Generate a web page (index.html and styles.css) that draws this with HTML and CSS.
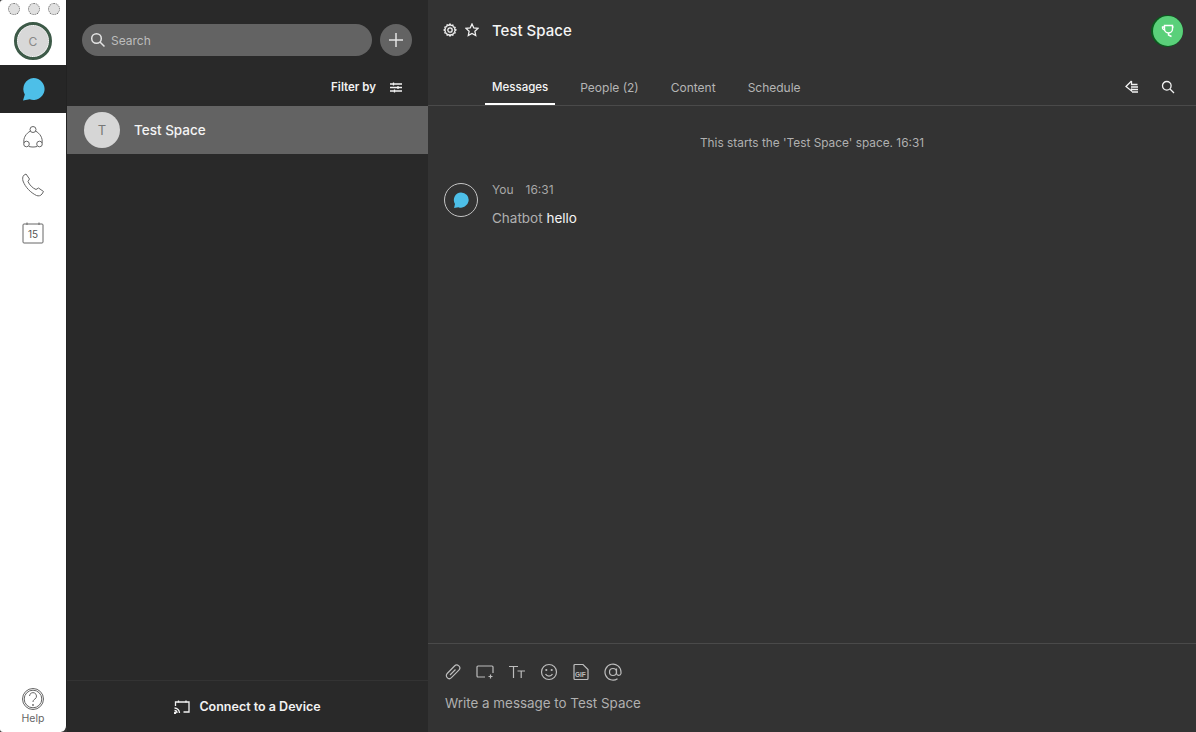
FILE: index.html
```html
<!DOCTYPE html>
<html lang="en">
<head>
<meta charset="utf-8">
<title>Test Space</title>
<link rel="stylesheet" href="styles.css">
</head>
<body>
<div class="app">
  <nav class="rail">
    <div class="lights"><span class="light"></span><span class="light"></span><span class="light"></span></div>
    <div class="me"><div class="me-inner">C</div></div>
    <div class="rail-item active">
      <svg width="26" height="26" viewBox="0 0 26 26"><path d="M13.500 2a11 11 0 1 1-3.800 21.300L3 24.500l1.800-6A11 11 0 0 1 13.500 2z" fill="#4dbfe8"/></svg>
    </div>
    <div class="rail-item">
      <svg class="line" width="26" height="26" viewBox="0 0 26 26"><circle cx="13" cy="5.500" r="3"/><circle cx="6.500" cy="20" r="2.800"/><circle cx="19.500" cy="20" r="2.800"/><path d="M10.500 7C6 9.500 3 14 4 19M15.500 7C20 9.500 23 14 22 19M9 22.500c2.700.7 5.300.7 8 0"/></svg>
    </div>
    <div class="rail-item">
      <svg class="line" width="26" height="26" viewBox="0 0 26 26"><path d="M3.500 3.500 6 2l3.500 5L8 9.500c1.500 3.500 4.500 6.500 8 8l2.500-1.500 5 3.500-1.500 2.500c-1.200 1.800-3.500 2.300-5.500 1.500C10.500 20.500 5.500 15.500 3 9c-.6-2-.4-4 .5-5.500z"/></svg>
    </div>
    <div class="rail-item">
      <svg class="line" width="26" height="26" viewBox="0 0 26 26"><rect x="3" y="4" width="20" height="19" rx="1"/><path d="M7 2.500v2.500M19 2.500v2.500"/><text x="13" y="18" class="cal-num">15</text></svg>
    </div>
    <div class="rail-help">
      <svg class="line" width="24" height="24" viewBox="0 0 24 24"><circle cx="12" cy="12" r="10.500"/><circle cx="12" cy="12" r="8.800"/><path d="M8.500 9a3.500 3.500 0 1 1 5.500 3c-1.300.8-2 1.500-2 3"/><circle cx="12" cy="18" r=".6"/></svg>
      <span>Help</span>
    </div>
  </nav>

  <aside class="list">
    <div class="search-row">
      <div class="search">
        <svg class="light-line" width="16" height="16" viewBox="0 0 16 16"><circle cx="6.500" cy="6.500" r="4.800"/><path d="m10 10 4.500 4.500"/></svg>
        <span>Search</span>
      </div>
      <div class="add"><svg class="light-line" width="16" height="16" viewBox="0 0 16 16"><path d="M8 1v14M1 8h14"/></svg></div>
    </div>
    <div class="filter">
      <span>Filter by</span>
      <svg class="white-line" width="12" height="11" viewBox="0 0 12 11"><path d="M0 2h12M0 5.500h12M0 9h12"/><path d="M3.500 .5v3M8 4v3M4.500 7.500v3"/></svg>
    </div>
    <div class="space-row">
      <div class="avatar">T</div>
      <span>Test Space</span>
    </div>
    <div class="device">
      <svg class="white-line" width="16" height="14" viewBox="0 0 16 14"><path d="M1.500 6V2h13.500v10H9.500"/><path d="M4.500 .5v2M12 .5v2"/><path d="M.5 8a5 5 0 0 1 5 5M.5 10.500a2.500 2.500 0 0 1 2.500 2.500"/><circle cx="1" cy="13" r=".6"/></svg>
      <span>Connect to a Device</span>
    </div>
  </aside>

  <main class="main">
    <header class="head">
      <div class="title-row">
        <svg class="white-line" width="14" height="14" viewBox="0 0 14 14"><circle cx="7" cy="7" r="2.200"/><path d="M7 1l1 1.600 1.800-.5.500 1.800 1.800.5-.5 1.800L13 7l-1.400 1 .5 1.800-1.800.5-.5 1.800-1.800-.5L7 13l-1-1.400-1.800.5-.5-1.800-1.800-.5.500-1.800L1 7l1.400-1-.5-1.800 1.800-.5.500-1.800 1.800.5z"/></svg>
        <svg class="white-line star" width="14" height="14" viewBox="0 0 14 14"><path d="m7 1 1.800 3.900 4.200.5-3.100 2.900.8 4.200L7 10.400l-3.700 2.100.8-4.200L1 5.400l4.200-.5z"/></svg>
        <h1>Test Space</h1>
        <div class="presence">
          <svg width="14" height="14" viewBox="0 0 14 14" fill="none" stroke="#fff" stroke-width="1.400"><path d="M3.500 1.500h8v3.500a4 4 0 0 1-8 0z"/><path d="M3.500 3H1.500a2.500 2.500 0 0 0 2.500 3M11.500 3h1"/><path d="M7.500 9v2l3 1.500"/></svg>
        </div>
      </div>
      <div class="tabs">
        <a class="tab on">Messages</a>
        <a class="tab">People (2)</a>
        <a class="tab">Content</a>
        <a class="tab">Schedule</a>
        <div class="tab-tools">
          <svg class="white-line" width="14" height="14" viewBox="0 0 14 14"><path d="M6.500 1 1 6.500 6.500 11V8.500"/><path d="M6.500 1v3.500h6M6 7h7M6 9.500h7M7 12h6"/></svg>
          <svg class="white-line" width="14" height="14" viewBox="0 0 14 14"><circle cx="5.800" cy="5.800" r="4.300"/><path d="m9 9 4 4"/></svg>
        </div>
      </div>
    </header>

    <section class="feed">
      <p class="start">This starts the 'Test Space' space. 16:31</p>
      <div class="msg">
        <div class="msg-avatar">
          <svg width="18" height="18" viewBox="0 0 26 26"><path d="M13 2a11 11 0 1 1-3.800 21.300L3 24.500l1.300-5.700A11 11 0 0 1 13 2z" fill="#4dbfe8"/></svg>
        </div>
        <div class="msg-body">
          <div class="msg-meta"><span>You</span><span>16:31</span></div>
          <div class="msg-text">Chatbot <b>hello</b></div>
        </div>
      </div>
    </section>

    <footer class="composer">
      <div class="tools">
        <svg class="grey-line" width="18" height="18" viewBox="0 0 18 18"><path d="M10.500 3 3.200 10.500a2.900 2.900 0 0 0 4.200 4.200l7.500-7.500a2.900 2.900 0 0 0-4.400-4.200zM6 12l5.500-5.500"/></svg>
        <svg class="grey-line" width="18" height="18" viewBox="0 0 18 18"><path d="M9 14H2a1 1 0 0 1-1-1V4a1 1 0 0 1 1-1h14a1 1 0 0 1 1 1v6"/><path d="M14.500 11.500v4M12.500 13.500h4"/></svg>
        <svg class="grey-line" width="18" height="18" viewBox="0 0 18 18"><path d="M1 3.500h9M5.500 3.500V15M9.500 8h7.500M13.200 8v7"/></svg>
        <svg class="grey-line" width="18" height="18" viewBox="0 0 18 18"><circle cx="9" cy="9" r="7.500"/><circle cx="6.300" cy="7" r=".5"/><circle cx="11.700" cy="7" r=".5"/><path d="M5.500 11a4 4 0 0 0 7 0"/></svg>
        <svg class="grey-line" width="18" height="18" viewBox="0 0 18 18"><path d="M11 1.500H3a1 1 0 0 0-1 1v13a1 1 0 0 0 1 1h12a1 1 0 0 0 1-1V6.500z"/><text x="3" y="14" class="gif">GIF</text></svg>
        <svg class="grey-line" width="18" height="18" viewBox="0 0 18 18"><circle cx="9" cy="9" r="3.500"/><path d="M12.500 5.500v5a2.300 2.300 0 0 0 4.500 0V9a8 8 0 1 0-3.500 6.700"/></svg>
      </div>
      <div class="write">Write a message to Test Space</div>
    </footer>
  </main>
</div>
</body>
</html>
```

FILE: styles.css
```css
* { box-sizing: border-box; }
html, body { margin: 0; height: 100%; background: #333; overflow: hidden; }
body { font-family: Inter, "Liberation Sans", sans-serif; }
svg { display: block; flex: none; }
.line { fill: none; stroke: #666; stroke-width: 1; }
.cal-num { font: 400 10px Inter, "Liberation Sans", sans-serif; fill: #555; stroke: none; text-anchor: middle; }
.light-line { fill: none; stroke: #e4e4e4; stroke-width: 1.500; }
.white-line { fill: none; stroke: #f2f2f2; stroke-width: 1.300; }
.grey-line { fill: none; stroke: #bdbdbd; stroke-width: 1.200; }
.gif { font: 700 6.500px "Liberation Sans", sans-serif; fill: #bdbdbd; stroke: none; }

.app { display: flex; height: 732px; }

.rail { position: relative; width: 67px; flex: none; background: #fff; border-right: 1px solid #222; border-radius: 3px 0 6px 3px; display: flex; flex-direction: column; }
.lights { position: absolute; top: 3px; left: 8px; display: flex; gap: 8px; }
.light { width: 12px; height: 12px; border-radius: 50%; background: #e0e0e0; border: 1px dotted #666; }
.me { height: 65px; padding-top: 23px; display: flex; justify-content: center; }
.me-inner { width: 32px; height: 32px; margin-top: 2px; border-radius: 50%; background: #d8d8d8; border: 1px dotted #fff; outline: 3px solid #3d5a48; color: #888; font-size: 12px; display: flex; align-items: center; justify-content: center; }
.rail-item { height: 48px; display: flex; align-items: center; justify-content: center; }
.rail-item.active { background: #262626; }
.rail-help { margin-top: auto; padding-bottom: 7px; display: flex; flex-direction: column; align-items: center; gap: 1px; }
.rail-help span { font-size: 10.500px; line-height: 13px; color: #666; }

.list { position: relative; width: 361px; flex: none; background: #292929; display: flex; flex-direction: column; }
.search-row { display: flex; gap: 8px; padding: 24px 16px 0 15px; }
.search { flex: 1; height: 32px; border-radius: 16px; background: #636363; display: flex; align-items: center; gap: 5px; padding-left: 8px; color: #bdbdbd; font-size: 12px; }
.add { width: 32px; height: 32px; border-radius: 50%; background: #636363; display: flex; align-items: center; justify-content: center; }
.filter { height: 50px; padding: 12px 26px 0 0; display: flex; align-items: center; justify-content: flex-end; gap: 14px; color: #f2f2f2; font-size: 11.500px; font-weight: 600; }
.space-row { height: 48px; background: #636363; display: flex; align-items: center; gap: 14px; padding-left: 17px; color: #f4f4f4; font-size: 13.500px; font-weight: 500; }
.avatar { width: 36px; height: 36px; border-radius: 50%; background: #d6d6d6; color: #777; font-size: 13px; font-weight: 400; display: flex; align-items: center; justify-content: center; }
.device { margin-top: auto; height: 52px; border-top: 1px solid #333; display: flex; align-items: center; justify-content: center; gap: 9px; color: #f2f2f2; font-size: 12.500px; font-weight: 600; }

.main { flex: 1; min-width: 0; display: flex; flex-direction: column; background: #333; }
.head { height: 106px; flex: none; border-bottom: 1px solid #4a4a4a; display: flex; flex-direction: column; }
.title-row { height: 69px; flex: none; padding: 0 13px 9px 15px; display: flex; align-items: center; }
.star { margin-left: 8px; }
h1 { margin: 0 0 0 13px; font-size: 15px; font-weight: 500; color: #f5f5f5; }
.presence { margin-left: auto; margin-top: 1px; width: 30px; height: 30px; border-radius: 50%; background: #5ad07a; box-shadow: -1px 0 0 1px #0b5a1e; display: flex; align-items: center; justify-content: center; }
.tabs { flex: 1; display: flex; padding-left: 57px; padding-right: 21px; gap: 0; }
.tab { padding: 0 7px; margin-right: 18px; height: 36px; display: flex; align-items: center; font-size: 12px; color: #b5b5b5; }
.tab.on { color: #f5f5f5; font-size: 11.500px; font-weight: 500; padding-top: 2px; border-bottom: 2px solid #fff; }
.tab-tools { margin-left: auto; display: flex; gap: 22px; padding-top: 11px; }

.feed { flex: 1; min-height: 0; padding: 0 16px; }
.start { margin: 30px 0 0; text-align: center; font-size: 11.850px; line-height: 15px; color: #b0b0b0; }
.msg { display: flex; gap: 14px; margin-top: 32px; }
.msg-avatar { width: 34px; height: 34px; border-radius: 50%; border: 1px solid #c4c4c4; display: flex; align-items: center; justify-content: center; }
.msg-body { margin-top: -1px; }
.msg-meta { display: flex; gap: 12px; font-size: 12px; line-height: 15px; color: #a8a8a8; }
.msg-text { margin-top: 13px; font-size: 13.500px; line-height: 17px; color: #b0b0b0; }
.msg-text b { font-weight: 400; color: #f5f5f5; }

.composer { height: 89px; flex: none; border-top: 1px solid #4a4a4a; padding: 19px 16px 0 17px; }
.tools { display: flex; gap: 14px; margin-left: -1px; }
.write { margin-top: 14px; font-size: 13.400px; line-height: 17px; color: #b0b0b0; }
```
